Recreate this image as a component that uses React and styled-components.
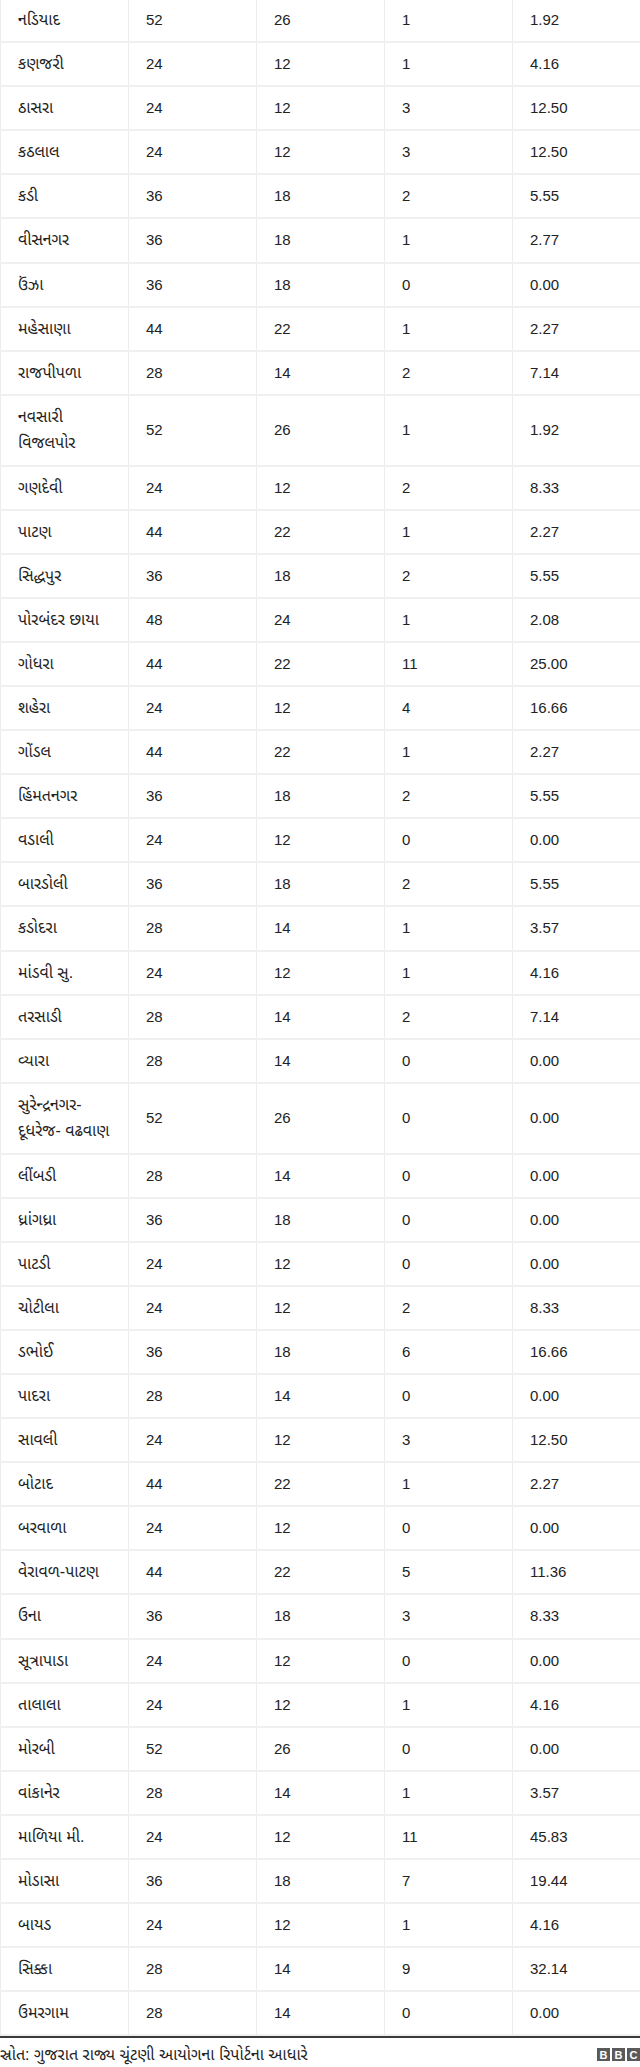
import React from "react";
import styled, { createGlobalStyle } from "styled-components";

const GlobalStyle = createGlobalStyle`
  body {
    margin: 0;
    background: #fff;
    font-family: "Liberation Sans", "Noto Sans Gujarati", "Lohit Gujarati", Arial, sans-serif;
  }
`;

// rows as they appear in the source table
const rows = [
  ["નડિયાદ", 52, 26, 1, "1.92"],
  ["કણજરી", 24, 12, 1, "4.16"],
  ["ઠાસરા", 24, 12, 3, "12.50"],
  ["કઠલાલ", 24, 12, 3, "12.50"],
  ["કડી", 36, 18, 2, "5.55"],
  ["વીસનગર", 36, 18, 1, "2.77"],
  ["ઉંઝા", 36, 18, 0, "0.00"],
  ["મહેસાણા", 44, 22, 1, "2.27"],
  ["રાજપીપળા", 28, 14, 2, "7.14"],
  ["નવસારી વિજલપોર", 52, 26, 1, "1.92"],
  ["ગણદેવી", 24, 12, 2, "8.33"],
  ["પાટણ", 44, 22, 1, "2.27"],
  ["સિદ્ધપુર", 36, 18, 2, "5.55"],
  ["પોરબંદર છાયા", 48, 24, 1, "2.08"],
  ["ગોધરા", 44, 22, 11, "25.00"],
  ["શહેરા", 24, 12, 4, "16.66"],
  ["ગોંડલ", 44, 22, 1, "2.27"],
  ["હિંમતનગર", 36, 18, 2, "5.55"],
  ["વડાલી", 24, 12, 0, "0.00"],
  ["બારડોલી", 36, 18, 2, "5.55"],
  ["કડોદરા", 28, 14, 1, "3.57"],
  ["માંડવી સુ.", 24, 12, 1, "4.16"],
  ["તરસાડી", 28, 14, 2, "7.14"],
  ["વ્યારા", 28, 14, 0, "0.00"],
  ["સુરેન્દ્રનગર-દૂધરેજ- વઢવાણ", 52, 26, 0, "0.00"],
  ["લીંબડી", 28, 14, 0, "0.00"],
  ["ધ્રાંગધ્રા", 36, 18, 0, "0.00"],
  ["પાટડી", 24, 12, 0, "0.00"],
  ["ચોટીલા", 24, 12, 2, "8.33"],
  ["ડભોઈ", 36, 18, 6, "16.66"],
  ["પાદરા", 28, 14, 0, "0.00"],
  ["સાવલી", 24, 12, 3, "12.50"],
  ["બોટાદ", 44, 22, 1, "2.27"],
  ["બરવાળા", 24, 12, 0, "0.00"],
  ["વેરાવળ-પાટણ", 44, 22, 5, "11.36"],
  ["ઉના", 36, 18, 3, "8.33"],
  ["સૂત્રાપાડા", 24, 12, 0, "0.00"],
  ["તાલાલા", 24, 12, 1, "4.16"],
  ["મોરબી", 52, 26, 0, "0.00"],
  ["વાંકાનેર", 28, 14, 1, "3.57"],
  ["માળિયા મી.", 24, 12, 11, "45.83"],
  ["મોડાસા", 36, 18, 7, "19.44"],
  ["બાયડ", 24, 12, 1, "4.16"],
  ["સિક્કા", 28, 14, 9, "32.14"],
  ["ઉમરગામ", 28, 14, 0, "0.00"],
];

function App() {
  return (
    <>
      <GlobalStyle />
      <Page>
        <Table>
          <colgroup>
            <col width='128' />
            <col width='128' />
            <col width='128' />
            <col width='128' />
            <col width='128' />
          </colgroup>
          <tbody>
            {rows.map((r) => (
              <Row key={r[0]}>
                {r.map((v, i) => (
                  <Cell key={i} $name={i === 0}>
                    {v}
                  </Cell>
                ))}
              </Row>
            ))}
          </tbody>
        </Table>
        <Footer>
          <Source>સ્રોત: ગુજરાત રાજ્ય ચૂંટણી આયોગના રિપોર્ટના આધારે</Source>
          <BbcLogo>
            <BbcBlock>B</BbcBlock>
            <BbcBlock>B</BbcBlock>
            <BbcBlock>C</BbcBlock>
          </BbcLogo>
        </Footer>
      </Page>
    </>
  );
}

export default App;

const Page = styled.div`
  width: 640px;
  margin-top: -1px;
`;

const Table = styled.table`
  width: 640px;
  table-layout: fixed;
  border-collapse: collapse;
  border-left: 1px solid #ececec;
`;

const Row = styled.tr`
  border-bottom: 2px solid #f0f0f0;
`;

const Cell = styled.td`
  padding: 8px 14px 7.5px 17px;
  font-size: ${(p) => (p.$name ? "16px" : "15px")};
  line-height: 26.6px;
  color: #222;
  vertical-align: middle;
  border-right: 1px solid #ececec;
  word-wrap: break-word;
`;

const Footer = styled.div`
  display: flex;
  align-items: center;
  justify-content: space-between;
  border-top: 2px solid #3a3a3a;
  height: 31px;
`;

const Source = styled.div`
  font-size: 16px;
  color: #222;
  line-height: 20px;
  padding-top: 2px;
`;

const BbcLogo = styled.div`
  display: flex;
  gap: 2px;
  padding-top: 2px;
`;

const BbcBlock = styled.span`
  display: flex;
  align-items: center;
  justify-content: center;
  width: 13px;
  height: 13px;
  background: #5a5a5a;
  color: #fff;
  font-family: "Liberation Sans", Arial, sans-serif;
  font-weight: bold;
  font-size: 11px;
`;
